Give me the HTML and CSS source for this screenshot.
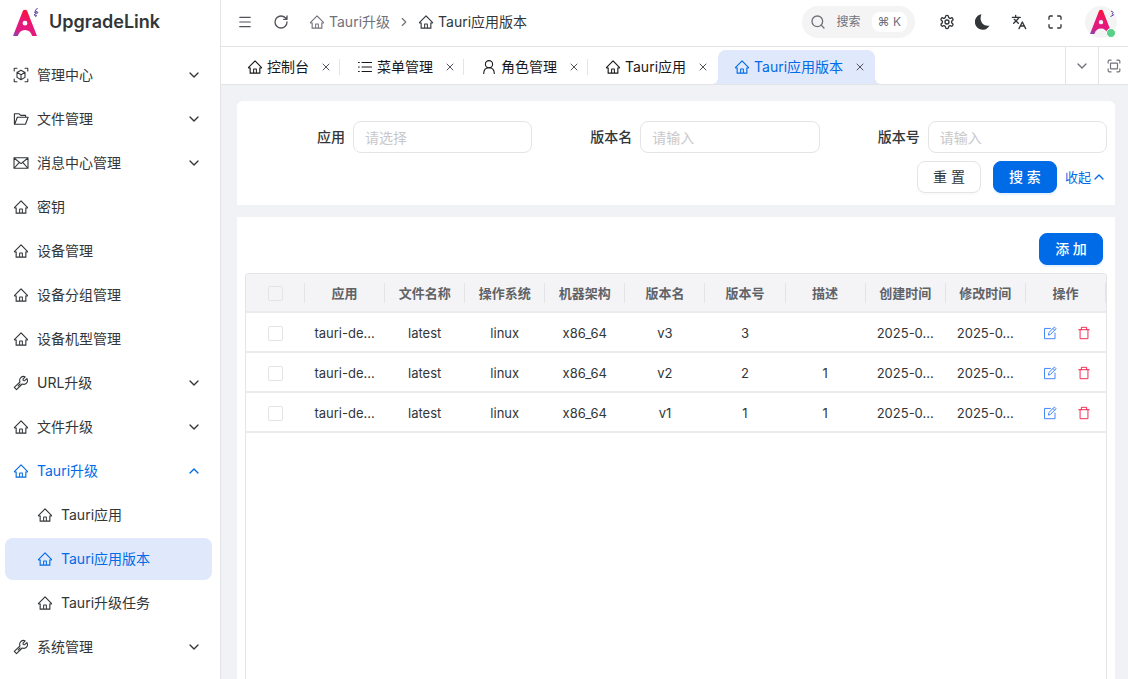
FILE: index.html
```
<!DOCTYPE html>
<html lang="zh-CN">
<head>
  <meta charset="UTF-8">
  <meta name="viewport" content="width=device-width, initial-scale=1.0">
  <link rel="stylesheet" href="styles.css">
  <title>Tauri应用版本 - UpgradeLink</title>
</head>
<body>
  <!-- icon sprite -->
  <svg class="sprite" aria-hidden="true">
    <symbol id="home" viewBox="0 0 1024 1024"><path fill="currentColor" d="M946.5 505L560.1 118.8l-25.9-25.9a31.5 31.5 0 0 0-44.4 0L77.5 505a63.9 63.9 0 0 0-18.8 46c.4 35.2 29.7 63.3 64.9 63.3h42.5V940h691.8V614.3h43.4c17.1 0 33.2-6.7 45.3-18.8a63.6 63.6 0 0 0 18.7-45.3c0-17-6.7-33.1-18.8-45.2zM568 868H456V664h112v204zm217.9-325.7V868H632V640c0-22.1-17.9-40-40-40H432c-22.1 0-40 17.9-40 40v228H238.1V542.3h-96l370-369.7 23.1 23.1L882 542.3h-96.1z"/></symbol>
    <symbol id="down" viewBox="0 0 24 24"><path class="line" d="m6 9 6 6 6-6"/></symbol>
    <symbol id="up" viewBox="0 0 24 24"><path class="line" d="m6 15 6-6 6 6"/></symbol>
    <symbol id="right" viewBox="0 0 24 24"><path class="line" d="m9 18 6-6-6-6"/></symbol>
    <symbol id="close" viewBox="0 0 24 24"><path class="line" d="M18 6 6 18M6 6l12 12"/></symbol>
    <symbol id="center" viewBox="0 0 16 16"><path class="thin" d="M1.2 4V1.8q0-.6.6-.6H4M12 1.2h2.2q.6 0 .6.6V4M14.8 12v2.2q0 .6-.6.6H12M4 14.8H1.8q-.6 0-.6-.6V12M8 3.2l4 2.2v5L8 12.8l-4-2.4v-5zM4 5.4l4 2.4 4-2.4M8 7.8v5"/></symbol>
    <symbol id="folder" viewBox="0 0 16 16"><path class="thin" d="M12.6 6.3V4.4H7.7L5.9 2.7H1.4v10.6h11.1l2.6-7H4.3l-2.6 7"/></symbol>
    <symbol id="mail" viewBox="0 0 16 16"><path class="thin" d="M1 2.7h14v10.6H1zM1 3l7 5.6L15 3M1.3 13l5-5.6M14.7 13l-5-5.6"/></symbol>
    <symbol id="tool" viewBox="0 0 16 16"><path class="thin" d="M13.9 3.6 11.7 5.7 10.2 5.5 10 4.1 12.2 1.9C10.4 1.1 8.4 1.6 7.3 3.2 6.5 4.4 6.5 5.7 7 6.8L1.3 12.4 3.5 14.7 9.2 9C10.8 9.7 12.6 9.3 13.7 7.9 14.7 6.6 14.6 4.9 13.9 3.6ZM5.2 10.8l1.9-1.9"/></symbol>
    <symbol id="list" viewBox="0 0 16 16"><path class="thin" d="M5 3.5h9.5M5 8h9.5M5 12.5h9.5M1.5 3.5h.8M1.5 8h.8M1.5 12.5h.8"/></symbol>
    <symbol id="user" viewBox="0 0 16 16"><circle class="thin" cx="8" cy="5.2" r="3.6"/><path class="thin" d="M2.7 14.5c.1-3.5 2.3-5.7 5.3-5.7s5.2 2.2 5.3 5.7"/></symbol>
    <symbol id="menu" viewBox="0 0 24 24"><path class="line" d="M3 4h18M3 12h18M3 20h18"/></symbol>
    <symbol id="refresh" viewBox="0 0 24 24"><path class="line" d="M21 12a9 9 0 1 1-9-9c2.52 0 4.93 1 6.74 2.74L21 8M21 3v5h-5"/></symbol>
    <symbol id="search" viewBox="0 0 24 24"><circle class="line" cx="11" cy="11" r="8"/><path class="line" d="m21 21-4.3-4.3"/></symbol>
    <symbol id="settings" viewBox="0 0 24 24"><path class="line" d="M12.22 2h-.44a2 2 0 0 0-2 2v.18a2 2 0 0 1-1 1.73l-.43.25a2 2 0 0 1-2 0l-.15-.08a2 2 0 0 0-2.73.73l-.22.38a2 2 0 0 0 .73 2.73l.15.1a2 2 0 0 1 1 1.72v.51a2 2 0 0 1-1 1.74l-.15.09a2 2 0 0 0-.73 2.73l.22.38a2 2 0 0 0 2.73.73l.15-.08a2 2 0 0 1 2 0l.43.25a2 2 0 0 1 1 1.73V20a2 2 0 0 0 2 2h.44a2 2 0 0 0 2-2v-.18a2 2 0 0 1 1-1.73l.43-.25a2 2 0 0 1 2 0l.15.08a2 2 0 0 0 2.73-.73l.22-.39a2 2 0 0 0-.73-2.73l-.15-.08a2 2 0 0 1-1-1.74v-.5a2 2 0 0 1 1-1.74l.15-.09a2 2 0 0 0 .73-2.73l-.22-.38a2 2 0 0 0-2.73-.73l-.15.08a2 2 0 0 1-2 0l-.43-.25a2 2 0 0 1-1-1.73V4a2 2 0 0 0-2-2z"/><circle class="line" cx="12" cy="12" r="3"/></symbol>
    <symbol id="moon" viewBox="0 0 16 16"><path fill="currentColor" d="M6.4.2A7.8 7.8 0 1 0 14.6 11.5C9.2 13.2 3.4 8 6.4.2z"/></symbol>
    <symbol id="lang" viewBox="0 0 24 24"><path class="line" d="m5 8 6 6M4 14l6-6 2-3M2 5h12M7 2v3M22 22l-5-10-5 10M14 18h6"/></symbol>
    <symbol id="full" viewBox="0 0 24 24"><path class="line" d="M8 3H5a2 2 0 0 0-2 2v3M21 8V5a2 2 0 0 0-2-2h-3M3 16v3a2 2 0 0 0 2 2h3M16 21h3a2 2 0 0 0 2-2v-3"/></symbol>
    <symbol id="focus" viewBox="0 0 24 24"><path class="line" d="M7 2H4a2 2 0 0 0-2 2v3M22 7V4a2 2 0 0 0-2-2h-3M2 17v3a2 2 0 0 0 2 2h3M17 22h3a2 2 0 0 0 2-2v-3"/><rect class="line" x="6" y="7" width="12" height="10" rx="1"/></symbol>
    <symbol id="edit" viewBox="0 0 16 16"><path class="thin" d="M8.5 2.8H1.7v11.7h12V8M6.3 10l.5-2.6L13 1.2l1.9 1.9-6.2 6.4zM11.3 2.9l1.9 1.9"/></symbol>
    <symbol id="trash" viewBox="0 0 16 16"><path class="thin" d="M2 4.2h12M5 4.2V1.5h6v2.7M3.5 4.2v10.3h9V4.2"/></symbol>
    <linearGradient id="pink" x1="0" y1="1" x2=".6" y2="0"><stop offset="0" stop-color="#7b4bb5"/><stop offset=".25" stop-color="#dd1b83"/><stop offset=".6" stop-color="#e8177a"/><stop offset="1" stop-color="#ff1030"/></linearGradient>
    <symbol id="logo" viewBox="0 0 24 27">
      <path fill="url(#pink)" fill-rule="evenodd" d="M10 1.5Q12 0 14 1.5L24 27h-4.8Q17.5 21 12 21T4.800 27H0zM12 11.800a2.400 2.400 0 1 0 0 4.800 2.400 2.400 0 0 0 0-4.800z"/>
    </symbol>
  </svg>

  <div class="layout">
    <aside class="sidebar">
      <a class="brand" href="#">
        <span class="brand-logo">
          <svg class="logo"><use href="#logo"/></svg>
          <svg class="spark" viewBox="0 0 6 9"><path d="M4.5 0 2 3l3 1.3L3.5 6M1 4l2.5 1L1 7l2.5.3L2.5 9"/></svg>
        </span>
        <span>UpgradeLink</span>
      </a>
      <nav class="menu">
        <a class="menu-item" href="#"><svg class="icon"><use href="#center"/></svg><span>管理中心</span><svg class="arrow"><use href="#down"/></svg></a>
        <a class="menu-item" href="#"><svg class="icon"><use href="#folder"/></svg><span>文件管理</span><svg class="arrow"><use href="#down"/></svg></a>
        <a class="menu-item" href="#"><svg class="icon"><use href="#mail"/></svg><span>消息中心管理</span><svg class="arrow"><use href="#down"/></svg></a>
        <a class="menu-item" href="#"><svg class="icon"><use href="#home"/></svg><span>密钥</span></a>
        <a class="menu-item" href="#"><svg class="icon"><use href="#home"/></svg><span>设备管理</span></a>
        <a class="menu-item" href="#"><svg class="icon"><use href="#home"/></svg><span>设备分组管理</span></a>
        <a class="menu-item" href="#"><svg class="icon"><use href="#home"/></svg><span>设备机型管理</span></a>
        <a class="menu-item" href="#"><svg class="icon"><use href="#tool"/></svg><span>URL升级</span><svg class="arrow"><use href="#down"/></svg></a>
        <a class="menu-item" href="#"><svg class="icon"><use href="#home"/></svg><span>文件升级</span><svg class="arrow"><use href="#down"/></svg></a>
        <a class="menu-item open" href="#"><svg class="icon"><use href="#home"/></svg><span>Tauri升级</span><svg class="arrow"><use href="#up"/></svg></a>
        <a class="menu-item sub" href="#"><svg class="icon"><use href="#home"/></svg><span>Tauri应用</span></a>
        <a class="menu-item sub active" href="#"><svg class="icon"><use href="#home"/></svg><span>Tauri应用版本</span></a>
        <a class="menu-item sub" href="#"><svg class="icon"><use href="#home"/></svg><span>Tauri升级任务</span></a>
        <a class="menu-item" href="#"><svg class="icon"><use href="#tool"/></svg><span>系统管理</span><svg class="arrow"><use href="#down"/></svg></a>
      </nav>
    </aside>

    <div class="main">
      <header class="header">
        <button class="icon-btn" type="button" aria-label="菜单"><svg class="icon-sm"><use href="#menu"/></svg></button>
        <button class="icon-btn" type="button" aria-label="刷新"><svg class="icon"><use href="#refresh"/></svg></button>
        <nav class="breadcrumb">
          <a href="#"><svg class="icon"><use href="#home"/></svg>Tauri升级</a>
          <svg class="icon-sm"><use href="#right"/></svg>
          <a class="current" href="#"><svg class="icon"><use href="#home"/></svg>Tauri应用版本</a>
        </nav>
        <div class="tools">
          <button class="search" type="button"><svg class="icon"><use href="#search"/></svg><span>搜索</span><kbd>⌘ K</kbd></button>
          <button class="icon-btn" type="button" aria-label="设置"><svg class="icon"><use href="#settings"/></svg></button>
          <button class="icon-btn" type="button" aria-label="主题"><svg class="icon"><use href="#moon"/></svg></button>
          <button class="icon-btn" type="button" aria-label="语言"><svg class="icon"><use href="#lang"/></svg></button>
          <button class="icon-btn" type="button" aria-label="全屏"><svg class="icon"><use href="#full"/></svg></button>
          <button class="avatar" type="button" aria-label="用户">
            <svg class="logo"><use href="#logo"/></svg>
            <svg class="spark" viewBox="0 0 6 9"><path d="m2 2 2.5 1.5M1.5 7.5 4.5 6 3 4"/></svg>
            <i class="dot"></i>
          </button>
        </div>
      </header>

      <div class="tabbar">
        <div class="tabs">
          <div class="tab"><a href="#"><svg class="icon"><use href="#home"/></svg>控制台</a><button type="button" aria-label="关闭"><svg><use href="#close"/></svg></button></div>
          <div class="tab"><a href="#"><svg class="icon"><use href="#list"/></svg>菜单管理</a><button type="button" aria-label="关闭"><svg><use href="#close"/></svg></button></div>
          <div class="tab"><a href="#"><svg class="icon"><use href="#user"/></svg>角色管理</a><button type="button" aria-label="关闭"><svg><use href="#close"/></svg></button></div>
          <div class="tab last"><a href="#"><svg class="icon"><use href="#home"/></svg>Tauri应用</a><button type="button" aria-label="关闭"><svg><use href="#close"/></svg></button></div>
          <div class="tab active"><a href="#"><svg class="icon"><use href="#home"/></svg>Tauri应用版本</a><button type="button" aria-label="关闭"><svg><use href="#close"/></svg></button></div>
        </div>
        <button class="tab-tool" type="button" aria-label="更多"><svg class="icon"><use href="#down"/></svg></button>
        <button class="tab-tool max" type="button" aria-label="最大化"><svg class="icon-sm"><use href="#focus"/></svg></button>
      </div>

      <main class="content">
        <form class="card filter">
          <div class="fields">
            <div class="field"><label for="app">应用</label><input id="app" type="text" placeholder="请选择"></div>
            <div class="field"><label for="name">版本名</label><input id="name" type="text" placeholder="请输入"></div>
            <div class="field"><label for="code">版本号</label><input id="code" type="text" placeholder="请输入"></div>
          </div>
          <div class="actions">
            <button class="btn" type="reset">重 置</button>
            <button class="btn primary" type="button">搜 索</button>
            <a class="collapse" href="#">收起<svg><use href="#up"/></svg></a>
          </div>
        </form>

        <section class="card list">
          <div class="toolbar"><button class="btn primary" type="button">添 加</button></div>
          <div class="table-wrap">
            <table>
              <thead>
                <tr>
                  <th class="check"><input type="checkbox" aria-label="全选"></th>
                  <th>应用</th><th>文件名称</th><th>操作系统</th><th>机器架构</th><th>版本名</th><th>版本号</th><th>描述</th><th>创建时间</th><th>修改时间</th><th>操作</th>
                </tr>
              </thead>
              <tbody>
                <tr>
                  <td><input type="checkbox" aria-label="选择 v3"></td>
                  <td>tauri-de...</td><td>latest</td><td>linux</td><td>x86_64</td><td>v3</td><td>3</td><td></td><td>2025-0...</td><td>2025-0...</td>
                  <td><div class="ops"><button class="edit" type="button" aria-label="编辑"><svg><use href="#edit"/></svg></button><button class="del" type="button" aria-label="删除"><svg><use href="#trash"/></svg></button></div></td>
                </tr>
                <tr>
                  <td><input type="checkbox" aria-label="选择 v2"></td>
                  <td>tauri-de...</td><td>latest</td><td>linux</td><td>x86_64</td><td>v2</td><td>2</td><td>1</td><td>2025-0...</td><td>2025-0...</td>
                  <td><div class="ops"><button class="edit" type="button" aria-label="编辑"><svg><use href="#edit"/></svg></button><button class="del" type="button" aria-label="删除"><svg><use href="#trash"/></svg></button></div></td>
                </tr>
                <tr>
                  <td><input type="checkbox" aria-label="选择 v1"></td>
                  <td>tauri-de...</td><td>latest</td><td>linux</td><td>x86_64</td><td>v1</td><td>1</td><td>1</td><td>2025-0...</td><td>2025-0...</td>
                  <td><div class="ops"><button class="edit" type="button" aria-label="编辑"><svg><use href="#edit"/></svg></button><button class="del" type="button" aria-label="删除"><svg><use href="#trash"/></svg></button></div></td>
                </tr>
              </tbody>
            </table>
          </div>
        </section>
      </main>
    </div>
  </div>
</body>
</html>
```

FILE: styles.css
```
* {
  box-sizing: border-box;
}

body {
  margin: 0;
  height: 100vh;
  overflow: hidden;
  font: 14px/20px Inter, "Noto Sans CJK SC", sans-serif;
  color: #323639;
  background: #f1f2f6;
}

a {
  color: inherit;
  text-decoration: none;
}

button {
  padding: 0;
  border: none;
  background: none;
  font: inherit;
  color: inherit;
  cursor: pointer;
}

svg {
  display: block;
  flex: none;
}

.sprite {
  position: absolute;
  width: 0;
  height: 0;
}

.line,
.thin {
  fill: none;
  stroke: currentColor;
  stroke-width: 2;
  stroke-linecap: round;
  stroke-linejoin: round;
}

.thin {
  stroke-width: 1.1;
}

.icon { width: 16px; height: 16px; }
.icon-sm { width: 14px; height: 14px; }

.layout {
  display: flex;
  height: 100%;
}

/* sidebar */
.sidebar {
  flex: none;
  width: 221px;
  background: #fff;
  border-right: 1px solid #e4e4e7;
}

.brand {
  display: flex;
  align-items: center;
  gap: 8px;
  height: 44px;
  padding-left: 13px;
  font-size: 18px;
  font-weight: 600;
}

.brand-logo,
.avatar {
  position: relative;
}

.logo {
  width: 24px;
  height: 27px;
}

.brand-logo {
  width: 28px;
}

.spark {
  position: absolute;
  top: -1px;
  right: 2px;
  width: 6px;
  height: 9px;
  fill: none;
  stroke: #5b3a9e;
}

.menu {
  display: flex;
  flex-direction: column;
  gap: 2px;
  padding: 10px 8px 0 5px;
}

.menu-item {
  display: flex;
  align-items: center;
  gap: 8px;
  height: 42px;
  padding: 0 10px 0 8px;
  border-radius: 8px;
}

.menu-item.sub {
  padding-left: 32px;
}

.menu-item.open,
.menu-item.active {
  color: #006be6;
}

.menu-item.active {
  background: #e0e8fb;
}

.arrow {
  width: 16px;
  height: 16px;
  margin-left: auto;
}

/* top bar */
.main {
  display: flex;
  flex-direction: column;
  flex: 1;
  min-width: 0;
}

.header {
  display: flex;
  align-items: center;
  height: 47px;
  flex: none;
  padding: 0 11px 3px 17px;
  background: #fff;
  border-bottom: 1px solid #e4e4e7;
}

.icon-btn {
  display: flex;
  padding: 0 10px;
}

.header > .icon-btn {
  color: #52525b;
}

.header > .icon-btn:first-child {
  padding: 0 11px 0 0;
}

.breadcrumb {
  display: flex;
  align-items: center;
  gap: 7px;
  margin-left: 10px;
  color: #71717a;
}

.breadcrumb a {
  display: flex;
  align-items: center;
  gap: 4px;
}

.breadcrumb .current {
  color: #323639;
}

.tools {
  display: flex;
  align-items: center;
  margin-left: auto;
}

.search {
  display: flex;
  align-items: center;
  gap: 11px;
  height: 32px;
  margin-right: 14px;
  padding: 0 8px;
  border-radius: 16px;
  background: #f4f4f5;
  color: #71717a;
  font-size: 12px;
}

.search kbd {
  padding: 0 6px;
  border-radius: 8px;
  background: #fff;
  font: 12px/20px Inter, "Noto Sans CJK SC", sans-serif;
}

.avatar {
  display: flex;
  justify-content: center;
  align-items: center;
  width: 32px;
  height: 32px;
  margin-left: 12px;
  border-radius: 50%;
  background: #f4f4f5;
}

.avatar .logo {
  width: 22px;
  height: 25px;
}

.avatar .spark {
  top: 3px;
}

.dot {
  position: absolute;
  right: 1px;
  bottom: 0;
  width: 10px;
  height: 10px;
  border: 1px solid #fff;
  border-radius: 50%;
  background: #57d188;
}

/* tabs */
.tabbar {
  display: flex;
  flex: none;
  height: 38px;
  background: #fff;
  border-bottom: 1px solid #e4e4e7;
}

.tabs {
  display: flex;
  flex: 1;
  align-items: flex-end;
  min-width: 0;
  padding-left: 10px;
}

.tab {
  position: relative;
  display: flex;
  align-items: center;
  gap: 11px;
  height: 34px;
  padding: 0 1px 0 16px;
  color: #18181b;
}

.tab::after {
  content: "";
  width: 1px;
  height: 16px;
  margin-left: -4px;
  background: #e4e4e7;
}

.tab.last::after,
.tab.active::after {
  visibility: hidden;
}

.tab a {
  display: flex;
  align-items: center;
  gap: 4px;
}

.tab button svg {
  width: 12px;
  height: 12px;
  color: #52525b;
}

.tab.active {
  color: #006be6;
  background: #e0e8fb;
  border-radius: 8px 8px 0 0;
}

/* flared bottom corners */
.tab.active::before {
  content: "";
  position: absolute;
  left: -6px;
  right: -6px;
  bottom: 0;
  height: 6px;
  background:
    radial-gradient(circle at 0 0, transparent 6px, #e0e8fb 6px) left / 6px 6px no-repeat,
    radial-gradient(circle at 100% 0, transparent 6px, #e0e8fb 6px) right / 6px 6px no-repeat;
}

.tab-tool {
  display: flex;
  align-items: center;
  justify-content: center;
  width: 33px;
  border-left: 1px solid #e4e4e7;
  color: #71717a;
}

.tab-tool.max {
  width: 30px;
}

/* content */
.content {
  display: flex;
  flex: 1;
  flex-direction: column;
  gap: 12px;
  min-height: 0;
  padding: 16px 13px 0 16px;
}

.card {
  padding: 0 8px;
  background: #fff;
}

.filter {
  padding-top: 20px;
  padding-bottom: 12px;
  border-radius: 6px 6px 0 0;
}

.fields {
  display: grid;
  grid-template-columns: repeat(3, minmax(0, 1fr));
}

.field {
  display: flex;
  align-items: center;
  gap: 8px;
}

.field label {
  width: 100px;
  flex: none;
  text-align: right;
  font-weight: 500;
}

.field input {
  flex: 1;
  min-width: 0;
  height: 32px;
  padding: 0 11px;
  border: 1px solid #e4e4e7;
  border-radius: 8px;
  font: inherit;
}

.field input::placeholder {
  color: #c8c8cc;
}

.actions {
  display: flex;
  align-items: center;
  justify-content: flex-end;
  margin-top: 8px;
}

.btn {
  width: 64px;
  height: 32px;
  border: 1px solid #e4e4e7;
  border-radius: 8px;
  background: #fff;
  box-shadow: 0 2px 0 rgba(0, 0, 0, 0.02);
}

.btn.primary {
  border-color: #006be6;
  background: #006be6;
  color: #fff;
  font-weight: 500;
  box-shadow: 0 2px 0 rgba(5, 145, 255, 0.1);
}

.actions .primary {
  margin: 0 8px 0 12px;
}

.collapse {
  display: flex;
  align-items: center;
  font-size: 13px;
  color: #006be6;
}

.collapse svg {
  width: 16px;
  height: 16px;
}

.list {
  display: flex;
  flex: 1;
  flex-direction: column;
  min-height: 0;
}

.toolbar {
  display: flex;
  justify-content: flex-end;
  padding: 16px 4px 8px;
}

.table-wrap {
  flex: 1;
  border: 1px solid #e4e4e7;
  border-bottom: none;
  border-radius: 4px 4px 0 0;
  overflow: hidden;
}

table {
  width: 100%;
  table-layout: fixed;
  border-collapse: separate;
  border-spacing: 0;
  font-size: 13px;
}

th,
td {
  height: 40px;
  padding: 0 1px 0 0;
  border-bottom: 2px solid #ebebed;
  text-align: center;
}

td {
  padding-top: 1px;
}

th {
  height: 39px;
  position: relative;
  background: #f4f4f6;
  color: #606266;
  font-weight: 700;
}

/* short divider between the column titles */
th::after {
  content: "";
  position: absolute;
  top: 9px;
  right: 0;
  width: 1px;
  height: 20px;
  background: #e4e4e7;
}

.check {
  width: 59px;
}

td input,
th input {
  display: block;
  appearance: none;
  width: 15px;
  height: 15px;
  margin: 2px auto 0;
  border: 1px solid #e4e4e7;
  border-radius: 2px;
}

.ops {
  display: flex;
  justify-content: center;
  gap: 20px;
  padding-left: 4px;
}

.ops svg {
  width: 14px;
  height: 14px;
}

.edit {
  color: #3b82f6;
}

.del {
  color: #f5264f;
}
```
